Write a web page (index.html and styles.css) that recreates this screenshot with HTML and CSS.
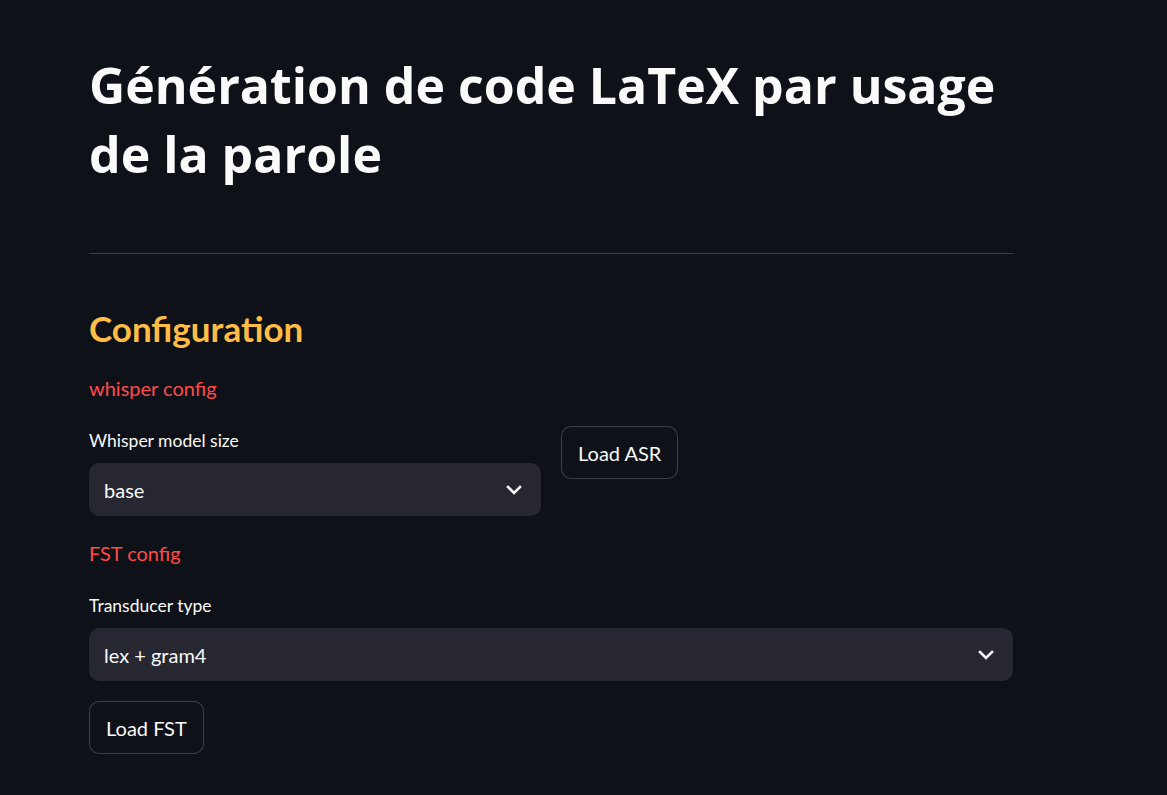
FILE: index.html
```html
<!DOCTYPE html>
<html lang="fr">
<head>
<meta charset="utf-8">
<title>Génération de code LaTeX par usage de la parole</title>
<link rel="stylesheet" href="styles.css">
</head>
<body>
<main class="main">
  <div class="block">
    <h1 class="title">Génération de code LaTeX par usage de la parole</h1>
    <hr class="divider">
    <h3 class="section">Configuration</h3>
    <p class="note note-first">whisper config</p>
    <div class="cols">
      <div class="col">
        <label class="label">Whisper model size</label>
        <div class="select">
          <span class="select-value">base</span>
          <svg class="chevron" width="16" height="10" viewBox="0 0 16 10"><path d="M2 2 L8 8 L14 2" fill="none" stroke="#fafafa" stroke-width="2.6" stroke-linecap="square" stroke-linejoin="miter"/></svg>
        </div>
      </div>
      <div class="col">
        <button class="btn">Load ASR</button>
      </div>
    </div>
    <p class="note note-second">FST config</p>
    <div class="field">
      <label class="label">Transducer type</label>
      <div class="select">
        <span class="select-value">lex + gram4</span>
        <svg class="chevron" width="16" height="10" viewBox="0 0 16 10"><path d="M2 2 L8 8 L14 2" fill="none" stroke="#fafafa" stroke-width="2.6" stroke-linecap="square" stroke-linejoin="miter"/></svg>
      </div>
    </div>
    <div class="btn-row">
      <button class="btn">Load FST</button>
    </div>
  </div>
</main>
</body>
</html>
```
FILE: styles.css
```css
html, body {
  margin: 0;
  padding: 0;
  background: #0e1117;
  color: #fafafa;
  font-family: "Source Sans Pro", Lato, "Noto Sans", sans-serif;
}

.main {
  padding: 0 0 0 89px;
  height: 795px;
  box-sizing: border-box;
  overflow: hidden;
}

.block {
  width: 924px;
  display: flex;
  flex-direction: column;
}

.title {
  margin: 0;
  padding-top: 51px;
  font-family: "Open Sans", Lato, sans-serif;
  font-size: 50px;
  line-height: 69px;
  font-weight: 700;
  letter-spacing: 0;
  color: #fafafa;
}

.divider {
  margin: 64px 0 0 0;
  border: none;
  height: 1px;
  background: rgba(250, 250, 250, 0.2);
}

.section {
  margin: 53px 0 0 0;
  font-size: 35px;
  line-height: 42px;
  font-weight: 700;
  color: #ffbd45;
}

.note {
  margin: 0;
  font-size: 20px;
  line-height: 30px;
  color: #ff4b4b;
}

.note-first { margin-top: 24px; }
.note-second { margin-top: 22px; }

.cols {
  margin-top: 23px;
  display: flex;
  gap: 20px;
}

.col {
  flex: 1 1 0;
  min-width: 0;
  display: flex;
  flex-direction: column;
  align-items: flex-start;
}

.field {
  margin-top: 23px;
  display: flex;
  flex-direction: column;
}

.label {
  display: block;
  font-size: 17.5px;
  line-height: 30px;
  margin-bottom: 7px;
  color: #fafafa;
}

.select {
  align-self: stretch;
  height: 53px;
  box-sizing: border-box;
  background: #262730;
  border-radius: 10px;
  display: flex;
  align-items: center;
  justify-content: space-between;
  padding: 0 19px 0 15px;
  font-size: 20px;
}

.chevron {
  display: block;
}

.btn-row {
  margin-top: 20px;
  display: flex;
}

.btn {
  height: 53px;
  box-sizing: border-box;
  padding: 0 16px;
  background: #0e1117;
  color: #fafafa;
  border: 1px solid rgba(250, 250, 250, 0.2);
  border-radius: 10px;
  font-family: inherit;
  font-size: 20px;
}
```
